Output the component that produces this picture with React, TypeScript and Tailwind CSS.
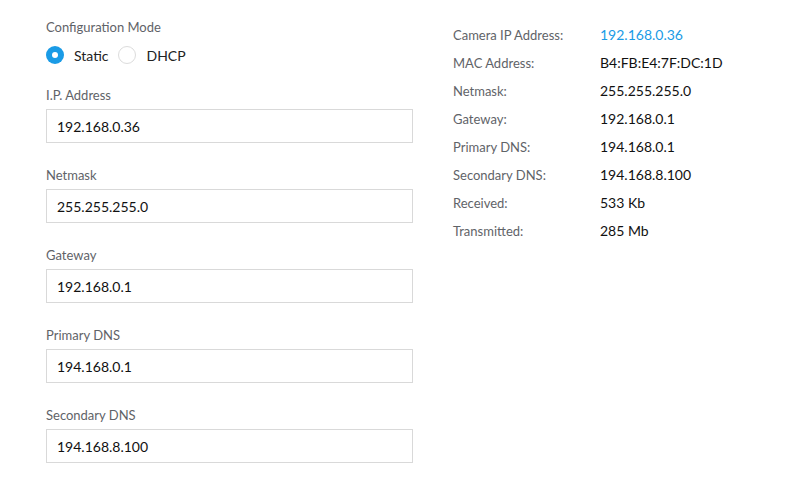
import { useState } from 'react';

const fields = [
  { label: 'I.P. Address', value: '192.168.0.36' },
  { label: 'Netmask', value: '255.255.255.0' },
  { label: 'Gateway', value: '192.168.0.1' },
  { label: 'Primary DNS', value: '194.168.0.1' },
  { label: 'Secondary DNS', value: '194.168.8.100' },
];

const info = [
  { label: 'Camera IP Address:', value: '192.168.0.36', link: true },
  { label: 'MAC Address:', value: 'B4:FB:E4:7F:DC:1D' },
  { label: 'Netmask:', value: '255.255.255.0' },
  { label: 'Gateway:', value: '192.168.0.1' },
  { label: 'Primary DNS:', value: '194.168.0.1' },
  { label: 'Secondary DNS:', value: '194.168.8.100' },
  { label: 'Received:', value: '533 Kb' },
  { label: 'Transmitted:', value: '285 Mb' },
];

function Radio({ checked, label, onClick }: { checked: boolean; label: string; onClick: () => void }) {
  return (
    <button onClick={onClick} className="flex items-center gap-[10px] text-[14px] text-[#222]">
      {checked ? (
        <span className="w-[18px] h-[18px] rounded-full bg-[#1a9be6] flex items-center justify-center">
          <span className="w-[6px] h-[6px] rounded-full bg-white" />
        </span>
      ) : (
        <span className="w-[18px] h-[18px] rounded-full border border-[#dcdcdc] bg-white" />
      )}
      {label}
    </button>
  );
}

export default function App() {
  const [mode, setMode] = useState<'static' | 'dhcp'>('static');

  return (
    <div className="w-[807px] h-[493px] bg-white flex font-['Lato',sans-serif] text-[#222]">
      <div className="w-[367px] ml-[46px] pt-[19px]">
        <div className="text-[13px] text-[#5f6368] leading-[16px]">Configuration Mode</div>
        <div className="flex items-center gap-[10px] mt-[11px] h-[18px]">
          <Radio checked={mode === 'static'} label="Static" onClick={() => setMode('static')} />
          <Radio checked={mode === 'dhcp'} label="DHCP" onClick={() => setMode('dhcp')} />
        </div>
        <div className="mt-[23px] flex flex-col gap-[24px]">
          {fields.map(f => (
            <div key={f.label} className="flex flex-col">
              <div className="text-[13px] text-[#5f6368] leading-[16px]">{f.label}</div>
              <input
                defaultValue={f.value}
                className="mt-[6px] w-full h-[34px] px-[10px] border border-[#d9d9d9] text-[14px] text-[#111] outline-none"
              />
            </div>
          ))}
        </div>
      </div>

      <div className="ml-[40px] pt-[27px] flex flex-col">
        {info.map(r => (
          <div key={r.label} className="flex h-[28px] items-start text-[13px] leading-[16px]">
            <span className="w-[147px] text-[#5f6368]">{r.label}</span>
            <span className={r.link ? 'text-[#1a9be6] text-[14px]' : 'text-[#111] text-[14px]'}>{r.value}</span>
          </div>
        ))}
      </div>
    </div>
  );
}
